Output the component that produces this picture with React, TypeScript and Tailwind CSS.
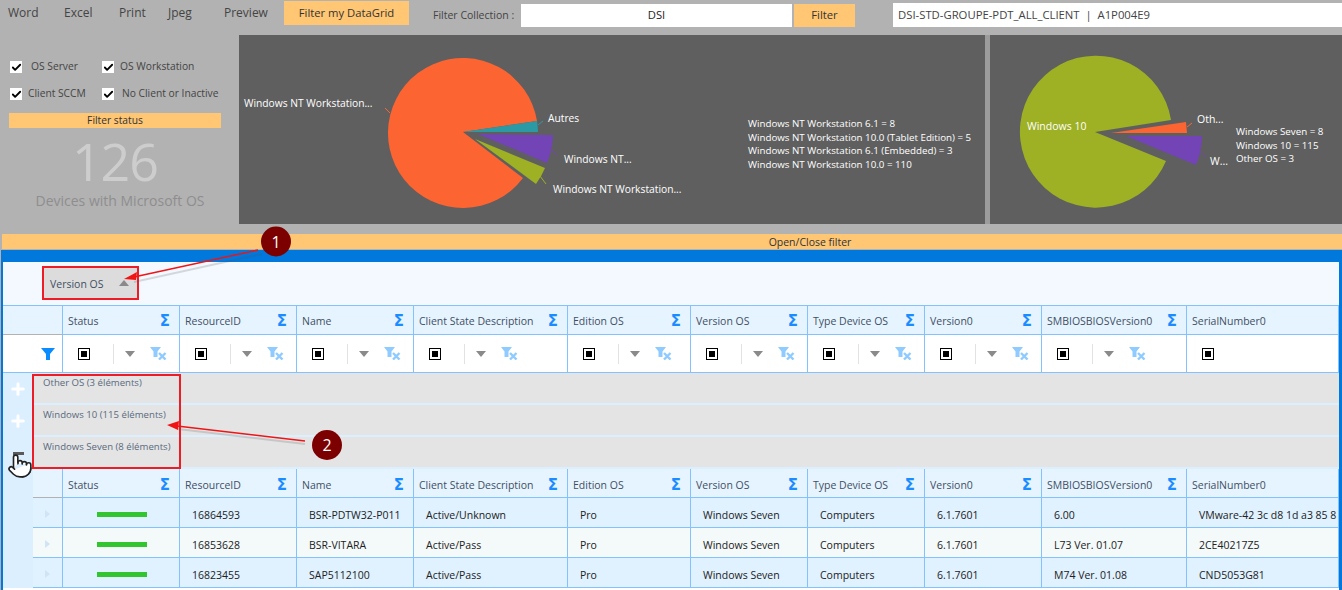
import React from "react";
import { Check, Plus, Pointer } from "lucide-react";

const GRID = "grid grid-cols-[60px_117px_117px_117px_154px_123px_117px_117px_117px_145px_152px]";
const GRID2 = "grid grid-cols-[30px_117px_117px_117px_154px_123px_117px_117px_117px_145px_152px]";
const COLS = ["Status", "ResourceID", "Name", "Client State Description", "Edition OS", "Version OS", "Type Device OS", "Version0", "SMBIOSBIOSVersion0", "SerialNumber0"];
const ROWS = [
  ["16864593", "BSR-PDTW32-P011", "Active/Unknown", "Pro", "Windows Seven", "Computers", "6.1.7601", "6.00", "VMware-42 3c d8 1d a3 85 8"],
  ["16853628", "BSR-VITARA", "Active/Pass", "Pro", "Windows Seven", "Computers", "6.1.7601", "L73 Ver. 01.07", "2CE40217Z5"],
  ["16823455", "SAP5112100", "Active/Pass", "Pro", "Windows Seven", "Computers", "6.1.7601", "M74 Ver. 01.08", "CND5053G81"],
];

function Funnel({ className }: { className: string }) {
  return (
    <svg viewBox="0 0 14 12" className={className}>
      <path d="M0 0H14L9 6V12H5V6Z" fill="currentColor" />
    </svg>
  );
}

function ClearFilter() {
  return (
    <svg viewBox="0 0 17 13" className="w-[17px] h-[13px] text-[#8fcbff]">
      <path d="M0 0H11L7.5 4.5V10H3.5V4.5Z" fill="currentColor" />
      <path d="M9 6L15.5 12.5M15.5 6L9 12.5" stroke="currentColor" strokeWidth="2.4" fill="none" />
    </svg>
  );
}

function HeaderCells({ lower }: { lower?: boolean }) {
  return (
    <>
      {COLS.map((c, i) => (
        <div key={c} className={`flex items-center justify-between pl-[5px] pr-[9px] ${lower ? "pt-[4px]" : "pt-[2px]"} border-r border-b border-[#84c1ff] text-[10.5px] text-[#3f4f63] whitespace-nowrap overflow-hidden`}>
          <span className="pt-[2px]">{c}</span>
          {i < COLS.length - 1 && <span className="font-['DejaVu_Sans',sans-serif] font-bold text-[15px] leading-none text-[#1a8cff]">Σ</span>}
        </div>
      ))}
    </>
  );
}

function FilterCell({ last }: { last: boolean }) {
  return (
    <div className="flex items-center border-r border-b border-[#84c1ff]">
      <div className="ml-[15px] w-[12px] h-[12px] border border-black flex items-center justify-center shrink-0">
        <div className="w-[6px] h-[6px] bg-black" />
      </div>
      {!last && (
        <>
          <div className="ml-[23px] w-px h-[20px] bg-[#e2e2e2]" />
          <div className="ml-[11px] w-0 h-0 border-l-[5px] border-r-[5px] border-t-[6px] border-l-transparent border-r-transparent border-t-[#8a8a8a]" />
          <div className="ml-[15px]"><ClearFilter /></div>
        </>
      )}
    </div>
  );
}

function GroupRow({ label }: { label: string }) {
  return (
    <div className="h-[32px] border-b-2 border-[#dcefff] bg-[#e4e4e4] pl-[10px] pt-[3px] text-[9.6px] leading-[14px] text-[#596a80]">
      {label}
    </div>
  );
}

function Check2() {
  return (
    <div className="w-[12px] h-[12px] bg-white flex items-center justify-center shrink-0">
      <Check size={11} strokeWidth={4} color="#000" />
    </div>
  );
}

export default function App() {
  return (
    <div className="relative w-[1342px] h-[590px] overflow-hidden bg-[#b2b2b2] font-['Open_Sans',sans-serif]">
      {/* toolbar */}
      <div className="flex h-[35px] text-[11.25px] text-[#444]">
        <div className="w-[64px] pl-[8px] pt-[4px] text-[12px]">Word</div>
        <div className="w-[55px] pt-[4px] text-[12px]">Excel</div>
        <div className="w-[49px] pt-[4px] text-[12px]">Print</div>
        <div className="w-[56px] pt-[4px] text-[12px]">Jpeg</div>
        <div className="w-[60px] pt-[4px] text-[12px]">Preview</div>
        <div className="w-[125px] h-[24px] mt-[1px] bg-[#ffc673] text-[#333] flex items-center justify-center">Filter my DataGrid</div>
        <div className="ml-[24px] w-[88px] h-[23px] mt-[4px] flex items-center text-[10.5px] text-[#444]">Filter Collection :</div>
        <div className="w-[271px] h-[23px] mt-[4px] bg-white text-[#222] flex items-center justify-center">DSI</div>
        <div className="ml-[2px] w-[61px] h-[23px] mt-[4px] bg-[#ffc673] text-[#333] flex items-center justify-center">Filter</div>
        <div className="ml-[38px] flex-1 h-[24px] mt-[3px] bg-white text-[#444] flex items-center pl-[5px] text-[11.3px] whitespace-pre">DSI-STD-GROUPE-PDT_ALL_CLIENT  |  A1P004E9</div>
      </div>

      {/* dashboard */}
      <div className="flex h-[189px]">
        <div className="w-[239px] pt-[26px] text-[10.25px] text-[#444]">
          <div className="flex h-[12px] items-center">
            <div className="ml-[10px]"><Check2 /></div>
            <span className="ml-[9px] w-[71px]">OS Server</span>
            <Check2 />
            <span className="ml-[6px]">OS Workstation</span>
          </div>
          <div className="flex h-[12px] items-center mt-[15px]">
            <div className="ml-[10px]"><Check2 /></div>
            <span className="ml-[6px] w-[74px] whitespace-nowrap">Client SCCM</span>
            <Check2 />
            <span className="ml-[8px] whitespace-nowrap">No Client or Inactive</span>
          </div>
          <div className="ml-[9px] mt-[13px] w-[212px] h-[15px] bg-[#ffc673] text-[#333] flex items-center justify-center">Filter status</div>
          <div className="ml-[9px] w-[212px] h-[60px] mt-[3px] flex items-center justify-center text-[52px] font-normal leading-none text-[#cdcdcd] tracking-[-1px]">126</div>
          <div className="ml-[9px] w-[212px] h-[20px] -mt-px pl-[10px] flex items-center justify-center text-[14px] text-[#8e8e8e] whitespace-nowrap">Devices with Microsoft OS</div>
        </div>

        <div className="w-[746px] bg-[#5f5f5f] flex">
          <svg viewBox="239 35 509 189" className="w-[509px] h-[189px] shrink-0">
            <path d="M463 132 L537 121 A75 75 0 1 0 523 178 Z" fill="#fc6432" />
            <path d="M463 132 L537 121 A75 75 0 0 1 538 132 Z" fill="#2b9aa5" />
            <path d="M478 134 L553 135 A75 75 0 0 1 547 163 Z" fill="#7244b6" />
            <path d="M475 139 L545 168 A75 75 0 0 1 536 184 Z" fill="#9eb024" />
            <path d="M385 108 L390 113" stroke="#fc6432" />
            <path d="M538 125 L543 121" stroke="#2b9aa5" />
            <path d="M552 150 L557 155" stroke="#7244b6" />
            <path d="M540 176 L546 184" stroke="#9eb024" />
            <g fill="#fff" className="text-[10.25px]">
              <text x="244" y="107">Windows NT Workstation...</text>
              <text x="548" y="122">Autres</text>
              <text x="564" y="163">Windows NT...</text>
              <text x="553" y="193">Windows NT Workstation...</text>
            </g>
          </svg>
          <div className="mt-[82px] text-[9.75px] leading-[13.5px] text-white whitespace-nowrap">
            <div>Windows NT Workstation 6.1 = 8</div>
            <div>Windows NT Workstation 10.0 (Tablet Edition) = 5</div>
            <div>Windows NT Workstation 6.1 (Embedded) = 3</div>
            <div>Windows NT Workstation 10.0 = 110</div>
          </div>
        </div>
        <div className="w-[5px] bg-[#9c9c9c]" />
        <div className="flex-1 bg-[#5f5f5f] flex">
          <svg viewBox="990 35 246 189" className="w-[246px] h-[189px] shrink-0">
            <path d="M1095 132 L1171 120 A76 76 0 1 0 1166 161 Z" fill="#9eb024" />
            <path d="M1111 133 L1186 122 L1187 133 Z" fill="#fc6432" />
            <path d="M1126 136 L1202 136 A76 76 0 0 1 1196 165 Z" fill="#7244b6" />
            <path d="M1187 127 L1192 123" stroke="#fc6432" />
            <path d="M1201 152 L1206 157" stroke="#7244b6" />
            <g fill="#fff" className="text-[10.5px]">
              <text x="1027" y="130">Windows 10</text>
              <text x="1197" y="123">Oth...</text>
              <text x="1210" y="165">W...</text>
            </g>
          </svg>
          <div className="mt-[90px] text-[9.75px] leading-[13.5px] text-white whitespace-nowrap">
            <div>Windows Seven = 8</div>
            <div>Windows 10 = 115</div>
            <div>Other OS = 3</div>
          </div>
        </div>
      </div>

      {/* open/close */}
      <div className="ml-[2px] mt-[10px] h-[15px] pt-[2px] bg-[#ffc673] text-[10.5px] text-[#333] flex items-center justify-center pl-[276px]">Open/Close filter</div>

      {/* data grid */}
      <div className="mt-[1px] ml-[1px] h-[340px] border-l-2 border-r-[3px] border-t-[12px] border-[#0078dc] bg-white overflow-hidden">
        <div className="h-[43px] bg-[#f4f9ff] pt-[4px]">
          <div className="ml-[39px] w-[97px] h-[34px] border-2 border-[#ee1c25] bg-[#dcdcdc] flex items-center pl-[6px] text-[10.5px] text-[#3f4f63]">
            <span className="w-[69px] pt-[3px]">Version OS</span>
            <div className="w-0 h-0 border-l-[5px] border-r-[5px] border-b-[6px] border-l-transparent border-r-transparent border-b-[#8a8a8a]" />
          </div>
        </div>

        <div className={`${GRID} h-[30px] bg-[#e6f4ff] border-t border-[#84c1ff]`}>
          <div className="border-r border-[#84c1ff] border-b border-b-[#b2b2b2]" />
          <HeaderCells />
        </div>
        <div className={`${GRID} h-[38px] bg-white`}>
          <div className="flex items-center justify-end pr-[7px] border-r border-b border-[#84c1ff]">
            <Funnel className="w-[14px] h-[12px] text-[#0a8cff]" />
          </div>
          {COLS.map((c, i) => <FilterCell key={c} last={i === COLS.length - 1} />)}
        </div>

        <div className="flex">
          <div className="w-[30px] shrink-0 bg-[#dcefff] flex flex-col items-center text-white">
            <div className="h-[32px] flex items-center justify-center"><Plus size={18} strokeWidth={4} /></div>
            <div className="h-[32px] flex items-center justify-center"><Plus size={18} strokeWidth={4} /></div>
            <div className="h-[32px] pt-[15px]"><div className="w-[11px] h-[3px] bg-[#5a5a5a]" /></div>
          </div>
          <div className="flex-1 min-w-0">
            <GroupRow label="Other OS (3 éléments)" />
            <GroupRow label="Windows 10 (115 éléments)" />
            <GroupRow label="Windows Seven (8 éléments)" />
            <div className={`${GRID2} h-[29px] bg-[#e6f4ff]`}>
              <div className="border-r border-[#84c1ff] border-b border-b-[#b2b2b2]" />
              <HeaderCells lower />
            </div>
            {ROWS.map((r, ri) => (
              <div key={r[0]} className={`${GRID2} h-[30px] text-[10.5px] text-[#222] whitespace-nowrap ${ri === 1 ? "bg-[#f4f9fa]" : "bg-[#e0f1ff]"}`}>
                <div className="flex items-center pl-[12px] pt-[3px] border-r border-b border-[#84c1ff]">
                  <div className="w-0 h-0 border-t-[4px] border-b-[4px] border-l-[5px] border-t-transparent border-b-transparent border-l-[#d0e4f4]" />
                </div>
                <div className="flex items-center pl-[34px] pt-[3px] border-r border-b border-[#84c1ff]">
                  <div className="w-[50px] h-[5px] bg-[#33c52f]" />
                </div>
                {r.map((v, i) => (
                  <div key={i} className="flex items-center pl-[12px] pt-[6px] border-r border-b border-[#84c1ff] overflow-hidden">{v}</div>
                ))}
              </div>
            ))}
          </div>
        </div>
      </div>

      {/* annotations */}
      <div className="absolute left-[32px] top-[374px] w-[149px] h-[95px] border-2 border-[#ee1c25]" />
      <svg viewBox="0 0 1342 590" className="absolute left-0 top-0 w-[1342px] h-[590px] pointer-events-none">
        <g opacity="0.2" stroke="#555" strokeWidth="2" fill="none">
          <path d="M262 254 L134 282" />
          <path d="M305 444 L178 429" />
        </g>
        <path d="M258 250 L134 277" stroke="#f01414" strokeWidth="1.5" />
        <path d="M124 279 L137 272 L136 280 Z" fill="#f01414" />
        <path d="M305 441 L177 426" stroke="#f01414" strokeWidth="1.5" />
        <path d="M167 425 L179 421 L178 430 Z" fill="#f01414" />
        <circle cx="276" cy="241.5" r="15" fill="#7d0000" />
        <circle cx="327" cy="445" r="15" fill="#7d0000" />
        <text x="276" y="247.5" textAnchor="middle" fill="#fff" className="text-[16px]">1</text>
        <text x="327" y="451" textAnchor="middle" fill="#fff" className="text-[16px]">2</text>
      </svg>
      <div className="absolute left-[7px] top-[453px]">
        <Pointer size={26} color="#222" fill="#fff" strokeWidth={1.5} />
      </div>
    </div>
  );
}
